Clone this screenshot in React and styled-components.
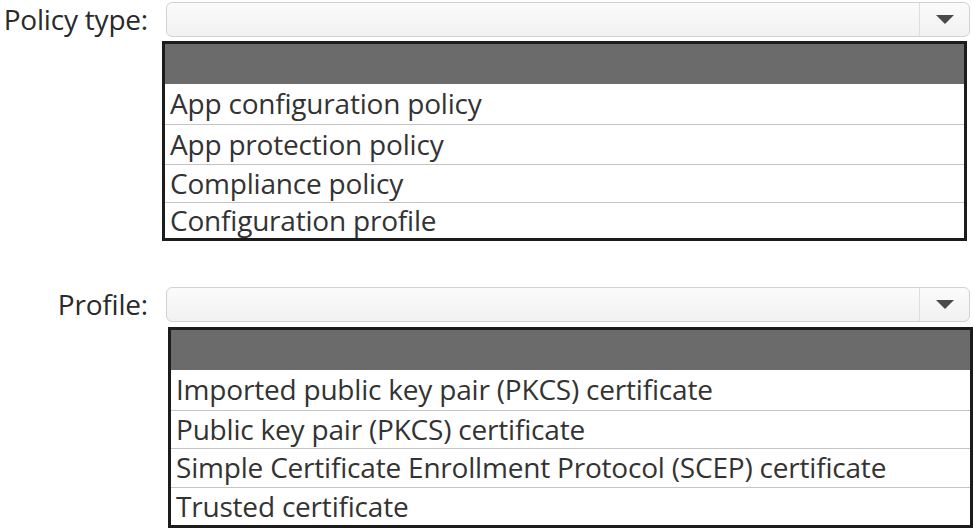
import React from "react";
import styled, { createGlobalStyle } from "styled-components";

const GlobalStyle = createGlobalStyle`
  body {
    margin: 0;
    background: #ffffff;
    font-family: "Open Sans", "Noto Sans", sans-serif;
  }
`;

const Page = styled.div`
  width: 974px;
  height: 531px;
  overflow: hidden;
  position: relative;
`;

const Section = styled.div`
  display: grid;
  grid-template-columns: 148px 804px;
  column-gap: 18px;
  margin-top: ${({ top }) => top}px;
`;

const Label = styled.div`
  font-size: 28px;
  color: #2a2a2a;
  text-align: right;
  line-height: 35px;
  letter-spacing: -0.2px;
  white-space: nowrap;
`;

const Select = styled.div`
  height: 33px;
  border: 1px solid #d2d2d2;
  border-radius: 6px;
  background: linear-gradient(#fbfbfb, #f1f1f1);
  display: flex;
  justify-content: flex-end;
  box-sizing: content-box;
`;

const ArrowBox = styled.div`
  width: 49px;
  border-left: 1px solid #dedede;
  display: flex;
  align-items: center;
  justify-content: center;
`;

const List = styled.div`
  grid-column: 2;
  margin-top: ${({ gap }) => gap}px;
  margin-left: ${({ shift }) => shift}px;
  width: 799px;
  border: 3px solid #1c1c1c;
  background: #ffffff;
`;

const Header = styled.div`
  height: 39px;
  background: #6b6b6b;
`;

const Row = styled.div`
  height: ${({ h }) => h}px;
  border-top: 1px solid ${({ first }) => (first ? "#6b6b6b" : "#c4c4c4")};
  font-size: 28px;
  color: #333333;
  padding-left: 5px;
  padding-bottom: 2px;
  box-sizing: border-box;
  display: flex;
  align-items: center;
  letter-spacing: -0.2px;
  white-space: nowrap;
`;

const Arrow = () => (
  <svg width="18" height="10" viewBox="0 0 18 10">
    <polygon points="0,0 18,0 9,9" fill="#4a4a4a" />
  </svg>
);

const Dropdown = ({ label, items, top, gap, shift, heights }) => (
  <Section top={top}>
    <Label>{label}</Label>
    <Select>
      <ArrowBox>
        <Arrow />
      </ArrowBox>
    </Select>
    <List gap={gap} shift={shift}>
      <Header />
      {items.map((item, i) => (
        <Row key={item} first={i === 0} h={heights[i]}>
          {item}
        </Row>
      ))}
    </List>
  </Section>
);

export default function App() {
  return (
    <Page>
      <GlobalStyle />
      <Dropdown
        label="Policy type:"
        top={2}
        gap={4}
        shift={-4}
        heights={[41, 40, 38, 36]}
        items={[
          "App configuration policy",
          "App protection policy",
          "Compliance policy",
          "Configuration profile",
        ]}
      />
      <Dropdown
        label="Profile:"
        top={46}
        gap={5}
        shift={2}
        heights={[41, 38, 39, 38]}
        items={[
          "Imported public key pair (PKCS) certificate",
          "Public key pair (PKCS) certificate",
          "Simple Certificate Enrollment Protocol (SCEP) certificate",
          "Trusted certificate",
        ]}
      />
    </Page>
  );
}
